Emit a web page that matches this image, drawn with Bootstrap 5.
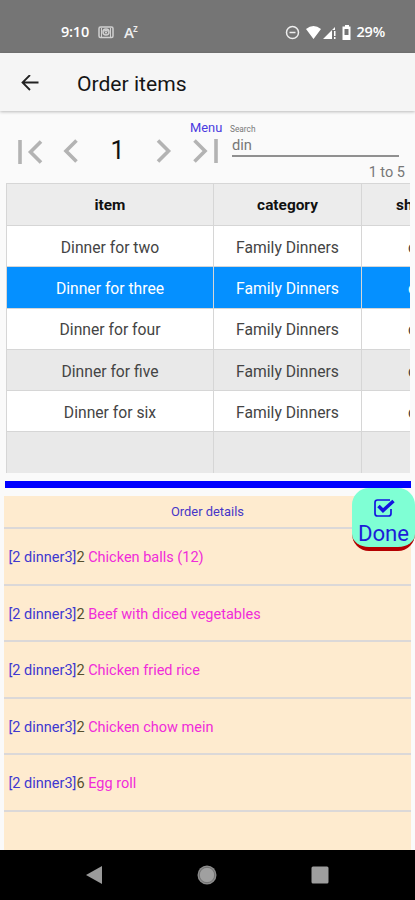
<!DOCTYPE html>
<html lang="en">
<head>
<meta charset="utf-8">
<meta name="viewport" content="width=device-width, initial-scale=1">
<title>Order items</title>
<link href="https://cdn.jsdelivr.net/npm/bootstrap@5.3.0/dist/css/bootstrap.min.css" rel="stylesheet">
<style>
body{font-family:Roboto,sans-serif;background:#fafafa;color:#111;line-height:1;overflow:hidden}
svg{display:block;flex:none}
.screen{width:415px;height:900px;overflow:hidden}
.statusbar{height:53px;background:#757575;color:#fff;padding:11px 30px 0 61px;font:500 15px/20px "Open Sans",sans-serif}
.statusbar .clock,.statusbar .pct{font-weight:600;font-size:14.5px;letter-spacing:-.2px}
.statusbar .lang{color:#eee;margin-left:9px}
.statusbar .lang sup{font-size:10px;top:-6px;margin-left:-1px}
.appbar{height:58px;background:#f5f5f5;box-shadow:0 1px 3px rgba(0,0,0,.25);padding:4px 20px 0}
.appbar h1{font-size:21.1px;font-weight:450;color:#151515;margin:0 0 0 36px}
.tools{height:72px;padding-left:17px}
.pager{width:203px;padding-top:27px}
.pager .prev{margin-left:19px}
.pager .page-no{width:77px;font-size:25px;line-height:26px;color:#111;text-align:center}
.pager .last{margin-left:21px}
.menu-link{font-size:12.9px;color:#4a3ae0;text-decoration:none;top:11px;left:190px}
.search{width:167px;margin-right:16px;padding:14px 0 0}
.search label{font-size:8.3px;color:#777;margin-left:-2px}
.search .value{font-size:14.7px;color:#777;border-bottom:2px solid #909090;height:24px;padding-top:5px}
.search .range{font-size:14.5px;color:#777;margin-top:9px;margin-right:-6px}
.grid-wrap{width:404px;margin-left:6px;overflow:hidden;height:290px}
.items{width:520px;table-layout:fixed;border-collapse:collapse;margin:0;font-size:15.7px}
.items th,.items td{padding:3px 0 0;height:41.3px;border:1px solid #d6d6d6;text-align:center;vertical-align:middle;color:#444;line-height:1}
.items th{height:42px;background:#ececec;color:#111;font-weight:700;font-size:15.4px}
.items td{background:#fff}
.items .alt td{background:#e9e9e9}
.items .picked td{background:#0590ff;color:#fff;font-weight:450}
.items th:nth-child(3){text-align:left;padding-left:34px}
.items td:nth-child(3){text-align:left;padding-left:46px}
.rule{height:7px;width:406px;margin:8px 0 8px 5px;background:#00f}
.details{width:407px;height:354px;margin-left:4px;background:#feebcf;font-size:14.5px}
.details .heading{height:33px;padding-top:1px;font-size:12.9px;color:#4636c8;border-bottom:2px solid #dbd8d8}
.details .line{height:56.5px;border-bottom:2px solid #dbd8d8;padding:4px 0 0 4.5px;white-space:pre}
.tag{color:#4038d0}.qty{color:#55502e}.dish{color:#f02bd9}
.done{right:0;top:488px;width:63px;height:63px;border:0;border-bottom:4px solid #b40000;border-radius:17px;background:#7fffd4;color:#1c1cd8;font-size:22.2px;line-height:24px;padding:10px 0 0}
.done span{margin-top:3px}
.navkeys{height:50px;background:#000;padding:0 86px 0 85px}
</style>
<script src="https://cdn.jsdelivr.net/npm/bootstrap@5.3.0/dist/js/bootstrap.bundle.min.js"></script>
</head>
<body>
<div class="screen position-relative d-flex flex-column">
  <header class="statusbar d-flex align-items-center flex-shrink-0">
    <span class="clock">9:10</span>
    <svg class="ms-2" width="18" height="14" viewBox="0 0 18 14" fill="none" stroke="#d0d0d0" stroke-width="1.500"><rect x="2" y="2" width="14" height="10.500" rx="1.500"/><path d="M4.500 3v9M13.500 3v9" stroke-width="1"/><circle cx="9" cy="7" r="3"/><path d="M7.500 5.500h3L9 8.500z" stroke-width="1"/></svg>
    <span class="lang fw-semibold">A<sup>z</sup></span>
    <span class="ms-auto d-flex align-items-center">
      <svg width="15" height="15" viewBox="0 0 15 15" fill="none" stroke="#eee" stroke-width="1.500"><circle cx="7.500" cy="7.500" r="6"/><path d="M4.500 7.500h6"/></svg>
      <svg class="ms-1" width="34" height="15" viewBox="0 0 34 15" fill="#fff"><path d="M2 4Q9.500 -2 17 4L9.500 14zM19 14L31 2V5H28V14z"/><path d="M30 6h1.500v5H30zM30 12h1.500v2H30z"/></svg>
      <svg class="ms-1" width="10" height="15" viewBox="0 0 10 15" fill="#fff"><path fill-rule="evenodd" d="M3 0h4v1.500h1.500V15h-8V1.500H3zM2.500 4v6h4V4z"/></svg>
    </span>
    <span class="pct ms-1">29%</span>
  </header>
  <nav class="appbar d-flex align-items-center flex-shrink-0">
    <svg width="21" height="18" viewBox="0 0 21 18" fill="none" stroke="#222" stroke-width="1.800"><path d="M18.500 7.500H3M10 0L2.500 7.500 10 15"/></svg>
    <h1>Order items</h1>
  </nav>
  <div class="tools d-flex flex-shrink-0 position-relative">
    <div class="pager d-flex align-items-start">
      <svg width="27" height="26" viewBox="0 0 27 26" fill="none" stroke="#b3b3b3" stroke-width="3.600"><path d="M3 2v24M24 3.500L13.500 14 24 24.500"/></svg>
      <svg class="prev" width="16" height="26" viewBox="0 0 16 26" fill="none" stroke="#b3b3b3" stroke-width="3.600"><path d="M13.500 2.500L3 13l10.500 10.500"/></svg>
      <span class="page-no">1</span>
      <svg width="16" height="26" viewBox="0 0 16 26" fill="none" stroke="#b3b3b3" stroke-width="3.600"><path d="M2 2.500L12.500 13 2 23.500"/></svg>
      <svg class="last" width="27" height="26" viewBox="0 0 27 26" fill="none" stroke="#b3b3b3" stroke-width="3.600"><path d="M1.500 2.500L12 13 1.500 23.500M23 1v24"/></svg>
    </div>
    <a class="menu-link position-absolute" href="#">Menu</a>
    <div class="search d-flex flex-column ms-auto">
      <label>Search</label>
      <div class="value">din</div>
      <div class="range text-end">1 to 5</div>
    </div>
  </div>
  <div class="grid-wrap flex-shrink-0">
    <table class="items">
      <colgroup><col style="width:207px"><col style="width:148px"><col></colgroup>
      <thead><tr><th>item</th><th>category</th><th>sh</th></tr></thead>
      <tbody>
        <tr><td>Dinner for two</td><td>Family Dinners</td><td>c</td></tr>
        <tr class="picked"><td>Dinner for three</td><td>Family Dinners</td><td>c</td></tr>
        <tr><td>Dinner for four</td><td>Family Dinners</td><td>c</td></tr>
        <tr class="alt"><td>Dinner for five</td><td>Family Dinners</td><td>c</td></tr>
        <tr><td>Dinner for six</td><td>Family Dinners</td><td>c</td></tr>
        <tr class="alt"><td></td><td></td><td></td></tr>
      </tbody>
    </table>
  </div>
  <div class="rule flex-shrink-0"></div>
  <section class="details flex-shrink-0">
    <div class="heading d-flex align-items-center justify-content-center">Order details</div>
    <div class="line d-flex align-items-center"><span class="tag">[2 dinner3]</span><span class="qty">2 </span><span class="dish">Chicken balls (12)</span></div>
    <div class="line d-flex align-items-center"><span class="tag">[2 dinner3]</span><span class="qty">2 </span><span class="dish">Beef with diced vegetables</span></div>
    <div class="line d-flex align-items-center"><span class="tag">[2 dinner3]</span><span class="qty">2 </span><span class="dish">Chicken fried rice</span></div>
    <div class="line d-flex align-items-center"><span class="tag">[2 dinner3]</span><span class="qty">2 </span><span class="dish">Chicken chow mein</span></div>
    <div class="line d-flex align-items-center"><span class="tag">[2 dinner3]</span><span class="qty">6 </span><span class="dish">Egg roll</span></div>
  </section>
  <button class="done position-absolute d-flex flex-column align-items-center" type="button">
    <svg width="22" height="20" viewBox="0 0 22 20" fill="none" stroke="#1414e0"><path stroke-width="1.700" d="M17 2H4.500Q2 2 2 4.500v11Q2 18 4.500 18h11Q18 18 18 15.500V11"/><path stroke-width="3.500" d="M5.500 8l4.500 4.500L20.500 3"/></svg>
    <span>Done</span>
  </button>
  <footer class="navkeys d-flex align-items-center justify-content-between flex-shrink-0">
    <svg width="18" height="18" viewBox="0 0 18 18" fill="#9a9a9a"><path d="M1 9L17 0v18z"/></svg>
    <svg width="20" height="20" viewBox="0 0 20 20"><circle cx="10" cy="10" r="9.500" fill="#8c8c8c"/><circle cx="10" cy="10" r="7.700" fill="#a0a0a0" stroke="#666" stroke-width=".8"/></svg>
    <svg width="18" height="18" viewBox="0 0 18 18"><rect x=".5" y=".5" width="17" height="17" rx="1.500" fill="#9e9e9e"/></svg>
  </footer>
</div>
</body>
</html>
